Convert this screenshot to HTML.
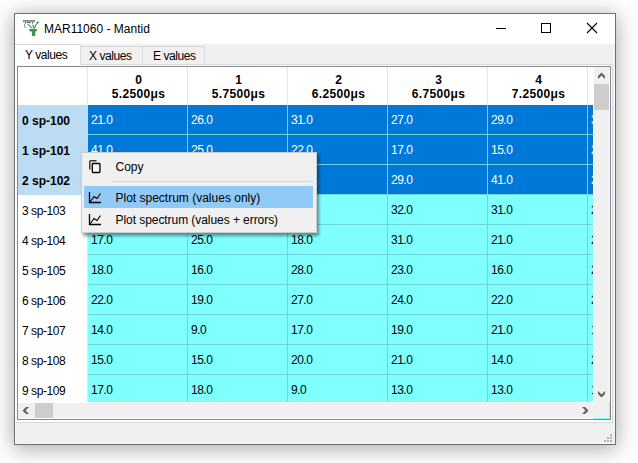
<!DOCTYPE html><html><head><meta charset="utf-8"><style>html,body{margin:0;padding:0;}body{width:638px;height:463px;overflow:hidden;background:#fff;position:relative;font-family:"Liberation Sans",sans-serif;}div{box-sizing:border-box;}</style></head><body>
<div style="position:absolute;left:14px;top:13px;width:602px;height:432px;box-shadow:0 3px 20px 1px rgba(0,0,0,0.34);"></div>
<div style="position:absolute;left:14px;top:13px;width:602px;height:432px;background:#f0f0f0;border:1px solid #6e6e6e;"></div>
<div style="position:absolute;left:15px;top:14px;width:1px;height:430px;background:#f6f6f6;"></div>
<div style="position:absolute;left:614px;top:14px;width:1px;height:430px;background:#f8f8f8;"></div>
<div style="position:absolute;left:15px;top:443px;width:600px;height:1px;background:#f8f8f8;"></div>
<div style="position:absolute;left:15px;top:14px;width:600px;height:30px;background:#fff;"></div>
<div style="position:absolute;left:44px;top:20.84px;line-height:16px;font-size:12px;font-weight:normal;color:#000;white-space:nowrap;">MAR11060 - Mantid</div>
<div style="position:absolute;left:496px;top:28px;width:10px;height:1px;background:#000;"></div>
<div style="position:absolute;left:541px;top:23px;width:10px;height:10px;border:1px solid #000;"></div>
<svg style="position:absolute;left:586px;top:22px" width="12" height="12" viewBox="0 0 12 12"><path d="M1 1L11 11M11 1L1 11" stroke="#000" stroke-width="1.1" fill="none"/></svg>
<svg style="position:absolute;left:22px;top:18px" width="18" height="19" viewBox="22 18 18 19">
<rect x="23.5" y="20.5" width="11" height="1.3" stroke="#8a8a8a" stroke-width="1" fill="#d4d4d4"/>
<path d="M24.5 24 L24.5 27 Q24.6 27.8 26 27.6" stroke="#9a9a9a" stroke-width="1" fill="none"/>
<path d="M25.5 22 L25.5 23.8 M32.5 22 L32.5 23.8" stroke="#707070" stroke-width="1" fill="none"/>
<path d="M27 22.6 L30.6 22.6" stroke="#606060" stroke-width="1.1" fill="none"/>
<path d="M32.6 24 L33 27.5" stroke="#c0c0c0" stroke-width="1" fill="none"/>
<path d="M27.6 24.2 Q30.2 25 31.6 28.2 M38.4 22 Q35.4 24 34.6 28.4 M33.4 25 L33.8 28.5" stroke="#3c9c4c" stroke-width="1.15" fill="none"/>
<ellipse cx="37.8" cy="22.4" rx="1.3" ry="0.8" fill="#3c9c4c"/>
<path d="M29 29.3 Q33 28.4 37.2 29.3 L37 30.6 Q36.2 31.7 35.3 31.8 L35.3 36 L31.9 36 L31.9 31.8 Q29.9 31.7 29.2 30.6 Z" fill="#3a9a4a"/>
</svg>
<div style="position:absolute;left:15px;top:44px;width:600px;height:20px;background:#f0f0f0;"></div>
<div style="position:absolute;left:15px;top:64px;width:598px;height:359px;background:#fff;border:1px solid #d9d9d9;border-left-color:#fff;"></div>
<div style="position:absolute;left:15px;top:44px;width:66px;height:21px;background:#fff;border-top:1px solid #d9d9d9;border-right:1px solid #d9d9d9;"></div>
<div style="position:absolute;left:25px;top:46.84px;line-height:16px;font-size:12px;font-weight:normal;color:#000;white-space:nowrap;letter-spacing:-0.45px;">Y values</div>
<div style="position:absolute;left:81px;top:46px;width:62px;height:18px;background:#f0f0f0;border-top:1px solid #d9d9d9;border-right:1px solid #d9d9d9;"></div>
<div style="position:absolute;left:89px;top:47.84px;line-height:16px;font-size:12px;font-weight:normal;color:#000;white-space:nowrap;letter-spacing:-0.45px;">X values</div>
<div style="position:absolute;left:143px;top:46px;width:62px;height:18px;background:#f0f0f0;border-top:1px solid #d9d9d9;border-right:1px solid #d9d9d9;"></div>
<div style="position:absolute;left:153px;top:47.84px;line-height:16px;font-size:12px;font-weight:normal;color:#000;white-space:nowrap;letter-spacing:-0.45px;">E values</div>
<div style="position:absolute;left:17px;top:66px;width:594px;height:354px;background:#fff;border:1px solid #828790;"></div>
<div style="position:absolute;left:18px;top:67px;width:575px;height:335px;overflow:hidden;">
<div style="position:absolute;left:169px;top:0px;width:1px;height:38px;background:#e5e5e5;"></div>
<div style="position:absolute;left:71px;top:5.599999999999994px;width:99px;text-align:center;font-size:12px;font-weight:bold;line-height:14px;letter-spacing:0.35px;text-indent:0.35px;">0<br>5.2500&#956;s</div>
<div style="position:absolute;left:269px;top:0px;width:1px;height:38px;background:#e5e5e5;"></div>
<div style="position:absolute;left:171px;top:5.599999999999994px;width:99px;text-align:center;font-size:12px;font-weight:bold;line-height:14px;letter-spacing:0.35px;text-indent:0.35px;">1<br>5.7500&#956;s</div>
<div style="position:absolute;left:369px;top:0px;width:1px;height:38px;background:#e5e5e5;"></div>
<div style="position:absolute;left:271px;top:5.599999999999994px;width:99px;text-align:center;font-size:12px;font-weight:bold;line-height:14px;letter-spacing:0.35px;text-indent:0.35px;">2<br>6.2500&#956;s</div>
<div style="position:absolute;left:469px;top:0px;width:1px;height:38px;background:#e5e5e5;"></div>
<div style="position:absolute;left:371px;top:5.599999999999994px;width:99px;text-align:center;font-size:12px;font-weight:bold;line-height:14px;letter-spacing:0.35px;text-indent:0.35px;">3<br>6.7500&#956;s</div>
<div style="position:absolute;left:569px;top:0px;width:1px;height:38px;background:#e5e5e5;"></div>
<div style="position:absolute;left:471px;top:5.599999999999994px;width:99px;text-align:center;font-size:12px;font-weight:bold;line-height:14px;letter-spacing:0.35px;text-indent:0.35px;">4<br>7.2500&#956;s</div>
<div style="position:absolute;left:669px;top:0px;width:1px;height:38px;background:#e5e5e5;"></div>
<div style="position:absolute;left:571px;top:5.599999999999994px;width:99px;text-align:center;font-size:12px;font-weight:bold;line-height:14px;letter-spacing:0.35px;text-indent:0.35px;">5<br>7.7500&#956;s</div>
<div style="position:absolute;left:69px;top:0px;width:1px;height:38px;background:#e5e5e5;"></div>
<div style="position:absolute;left:0px;top:38px;width:69px;height:30px;background:#bcdcf4;"></div>
<div style="position:absolute;left:69px;top:38px;width:1px;height:30px;background:#c2dff5;"></div>
<div style="position:absolute;left:4px;top:45.84px;line-height:16px;font-size:12px;font-weight:bold;color:#000;white-space:nowrap;">0 sp-100</div>
<div style="position:absolute;left:70px;top:38px;width:505px;height:30px;background:#0078d7;"></div>
<div style="position:absolute;left:73px;top:44.84px;line-height:16px;font-size:12px;font-weight:normal;color:#fff;white-space:nowrap;letter-spacing:-0.5px;">21.0</div>
<div style="position:absolute;left:173px;top:44.84px;line-height:16px;font-size:12px;font-weight:normal;color:#fff;white-space:nowrap;letter-spacing:-0.5px;">26.0</div>
<div style="position:absolute;left:273px;top:44.84px;line-height:16px;font-size:12px;font-weight:normal;color:#fff;white-space:nowrap;letter-spacing:-0.5px;">31.0</div>
<div style="position:absolute;left:373px;top:44.84px;line-height:16px;font-size:12px;font-weight:normal;color:#fff;white-space:nowrap;letter-spacing:-0.5px;">27.0</div>
<div style="position:absolute;left:473px;top:44.84px;line-height:16px;font-size:12px;font-weight:normal;color:#fff;white-space:nowrap;letter-spacing:-0.5px;">29.0</div>
<div style="position:absolute;left:573px;top:44.84px;line-height:16px;font-size:12px;font-weight:normal;color:#fff;white-space:nowrap;letter-spacing:-0.5px;">31.0</div>
<div style="position:absolute;left:70px;top:67px;width:505px;height:1px;background:#70d4d8;"></div>
<div style="position:absolute;left:0px;top:68px;width:69px;height:30px;background:#bcdcf4;"></div>
<div style="position:absolute;left:69px;top:68px;width:1px;height:30px;background:#c2dff5;"></div>
<div style="position:absolute;left:4px;top:75.84px;line-height:16px;font-size:12px;font-weight:bold;color:#000;white-space:nowrap;">1 sp-101</div>
<div style="position:absolute;left:70px;top:68px;width:505px;height:30px;background:#0078d7;"></div>
<div style="position:absolute;left:73px;top:74.84px;line-height:16px;font-size:12px;font-weight:normal;color:#fff;white-space:nowrap;letter-spacing:-0.5px;">41.0</div>
<div style="position:absolute;left:173px;top:74.84px;line-height:16px;font-size:12px;font-weight:normal;color:#fff;white-space:nowrap;letter-spacing:-0.5px;">25.0</div>
<div style="position:absolute;left:273px;top:74.84px;line-height:16px;font-size:12px;font-weight:normal;color:#fff;white-space:nowrap;letter-spacing:-0.5px;">22.0</div>
<div style="position:absolute;left:373px;top:74.84px;line-height:16px;font-size:12px;font-weight:normal;color:#fff;white-space:nowrap;letter-spacing:-0.5px;">17.0</div>
<div style="position:absolute;left:473px;top:74.84px;line-height:16px;font-size:12px;font-weight:normal;color:#fff;white-space:nowrap;letter-spacing:-0.5px;">15.0</div>
<div style="position:absolute;left:573px;top:74.84px;line-height:16px;font-size:12px;font-weight:normal;color:#fff;white-space:nowrap;letter-spacing:-0.5px;">21.0</div>
<div style="position:absolute;left:70px;top:97px;width:505px;height:1px;background:#70d4d8;"></div>
<div style="position:absolute;left:0px;top:98px;width:69px;height:30px;background:#bcdcf4;"></div>
<div style="position:absolute;left:69px;top:98px;width:1px;height:30px;background:#c2dff5;"></div>
<div style="position:absolute;left:4px;top:105.84px;line-height:16px;font-size:12px;font-weight:bold;color:#000;white-space:nowrap;">2 sp-102</div>
<div style="position:absolute;left:70px;top:98px;width:505px;height:30px;background:#0078d7;"></div>
<div style="position:absolute;left:73px;top:104.84px;line-height:16px;font-size:12px;font-weight:normal;color:#fff;white-space:nowrap;letter-spacing:-0.5px;">33.0</div>
<div style="position:absolute;left:173px;top:104.84px;line-height:16px;font-size:12px;font-weight:normal;color:#fff;white-space:nowrap;letter-spacing:-0.5px;">20.0</div>
<div style="position:absolute;left:273px;top:104.84px;line-height:16px;font-size:12px;font-weight:normal;color:#fff;white-space:nowrap;letter-spacing:-0.5px;">19.0</div>
<div style="position:absolute;left:373px;top:104.84px;line-height:16px;font-size:12px;font-weight:normal;color:#fff;white-space:nowrap;letter-spacing:-0.5px;">29.0</div>
<div style="position:absolute;left:473px;top:104.84px;line-height:16px;font-size:12px;font-weight:normal;color:#fff;white-space:nowrap;letter-spacing:-0.5px;">41.0</div>
<div style="position:absolute;left:573px;top:104.84px;line-height:16px;font-size:12px;font-weight:normal;color:#fff;white-space:nowrap;letter-spacing:-0.5px;">25.0</div>
<div style="position:absolute;left:70px;top:127px;width:505px;height:1px;background:#70d4d8;"></div>
<div style="position:absolute;left:0px;top:128px;width:69px;height:30px;background:#fff;"></div>
<div style="position:absolute;left:69px;top:128px;width:1px;height:30px;background:#e5e5e5;"></div>
<div style="position:absolute;left:4px;top:135.84px;line-height:16px;font-size:12px;font-weight:normal;color:#000;white-space:nowrap;letter-spacing:-0.45px;">3 sp-103</div>
<div style="position:absolute;left:70px;top:128px;width:505px;height:30px;background:#80ffff;"></div>
<div style="position:absolute;left:73px;top:134.84px;line-height:16px;font-size:12px;font-weight:normal;color:#000;white-space:nowrap;letter-spacing:-0.5px;">23.0</div>
<div style="position:absolute;left:173px;top:134.84px;line-height:16px;font-size:12px;font-weight:normal;color:#000;white-space:nowrap;letter-spacing:-0.5px;">18.0</div>
<div style="position:absolute;left:273px;top:134.84px;line-height:16px;font-size:12px;font-weight:normal;color:#000;white-space:nowrap;letter-spacing:-0.5px;">24.0</div>
<div style="position:absolute;left:373px;top:134.84px;line-height:16px;font-size:12px;font-weight:normal;color:#000;white-space:nowrap;letter-spacing:-0.5px;">32.0</div>
<div style="position:absolute;left:473px;top:134.84px;line-height:16px;font-size:12px;font-weight:normal;color:#000;white-space:nowrap;letter-spacing:-0.5px;">31.0</div>
<div style="position:absolute;left:573px;top:134.84px;line-height:16px;font-size:12px;font-weight:normal;color:#000;white-space:nowrap;letter-spacing:-0.5px;">21.0</div>
<div style="position:absolute;left:70px;top:157px;width:505px;height:1px;background:#70d4d8;"></div>
<div style="position:absolute;left:0px;top:158px;width:69px;height:30px;background:#fff;"></div>
<div style="position:absolute;left:69px;top:158px;width:1px;height:30px;background:#e5e5e5;"></div>
<div style="position:absolute;left:4px;top:165.84px;line-height:16px;font-size:12px;font-weight:normal;color:#000;white-space:nowrap;letter-spacing:-0.45px;">4 sp-104</div>
<div style="position:absolute;left:70px;top:158px;width:505px;height:30px;background:#80ffff;"></div>
<div style="position:absolute;left:73px;top:164.84px;line-height:16px;font-size:12px;font-weight:normal;color:#000;white-space:nowrap;letter-spacing:-0.5px;">17.0</div>
<div style="position:absolute;left:173px;top:164.84px;line-height:16px;font-size:12px;font-weight:normal;color:#000;white-space:nowrap;letter-spacing:-0.5px;">25.0</div>
<div style="position:absolute;left:273px;top:164.84px;line-height:16px;font-size:12px;font-weight:normal;color:#000;white-space:nowrap;letter-spacing:-0.5px;">18.0</div>
<div style="position:absolute;left:373px;top:164.84px;line-height:16px;font-size:12px;font-weight:normal;color:#000;white-space:nowrap;letter-spacing:-0.5px;">31.0</div>
<div style="position:absolute;left:473px;top:164.84px;line-height:16px;font-size:12px;font-weight:normal;color:#000;white-space:nowrap;letter-spacing:-0.5px;">21.0</div>
<div style="position:absolute;left:573px;top:164.84px;line-height:16px;font-size:12px;font-weight:normal;color:#000;white-space:nowrap;letter-spacing:-0.5px;">21.0</div>
<div style="position:absolute;left:70px;top:187px;width:505px;height:1px;background:#70d4d8;"></div>
<div style="position:absolute;left:0px;top:188px;width:69px;height:30px;background:#fff;"></div>
<div style="position:absolute;left:69px;top:188px;width:1px;height:30px;background:#e5e5e5;"></div>
<div style="position:absolute;left:4px;top:195.84px;line-height:16px;font-size:12px;font-weight:normal;color:#000;white-space:nowrap;letter-spacing:-0.45px;">5 sp-105</div>
<div style="position:absolute;left:70px;top:188px;width:505px;height:30px;background:#80ffff;"></div>
<div style="position:absolute;left:73px;top:194.84px;line-height:16px;font-size:12px;font-weight:normal;color:#000;white-space:nowrap;letter-spacing:-0.5px;">18.0</div>
<div style="position:absolute;left:173px;top:194.84px;line-height:16px;font-size:12px;font-weight:normal;color:#000;white-space:nowrap;letter-spacing:-0.5px;">16.0</div>
<div style="position:absolute;left:273px;top:194.84px;line-height:16px;font-size:12px;font-weight:normal;color:#000;white-space:nowrap;letter-spacing:-0.5px;">28.0</div>
<div style="position:absolute;left:373px;top:194.84px;line-height:16px;font-size:12px;font-weight:normal;color:#000;white-space:nowrap;letter-spacing:-0.5px;">23.0</div>
<div style="position:absolute;left:473px;top:194.84px;line-height:16px;font-size:12px;font-weight:normal;color:#000;white-space:nowrap;letter-spacing:-0.5px;">16.0</div>
<div style="position:absolute;left:573px;top:194.84px;line-height:16px;font-size:12px;font-weight:normal;color:#000;white-space:nowrap;letter-spacing:-0.5px;">25.0</div>
<div style="position:absolute;left:70px;top:217px;width:505px;height:1px;background:#70d4d8;"></div>
<div style="position:absolute;left:0px;top:218px;width:69px;height:30px;background:#fff;"></div>
<div style="position:absolute;left:69px;top:218px;width:1px;height:30px;background:#e5e5e5;"></div>
<div style="position:absolute;left:4px;top:225.84px;line-height:16px;font-size:12px;font-weight:normal;color:#000;white-space:nowrap;letter-spacing:-0.45px;">6 sp-106</div>
<div style="position:absolute;left:70px;top:218px;width:505px;height:30px;background:#80ffff;"></div>
<div style="position:absolute;left:73px;top:224.84px;line-height:16px;font-size:12px;font-weight:normal;color:#000;white-space:nowrap;letter-spacing:-0.5px;">22.0</div>
<div style="position:absolute;left:173px;top:224.84px;line-height:16px;font-size:12px;font-weight:normal;color:#000;white-space:nowrap;letter-spacing:-0.5px;">19.0</div>
<div style="position:absolute;left:273px;top:224.84px;line-height:16px;font-size:12px;font-weight:normal;color:#000;white-space:nowrap;letter-spacing:-0.5px;">27.0</div>
<div style="position:absolute;left:373px;top:224.84px;line-height:16px;font-size:12px;font-weight:normal;color:#000;white-space:nowrap;letter-spacing:-0.5px;">24.0</div>
<div style="position:absolute;left:473px;top:224.84px;line-height:16px;font-size:12px;font-weight:normal;color:#000;white-space:nowrap;letter-spacing:-0.5px;">22.0</div>
<div style="position:absolute;left:573px;top:224.84px;line-height:16px;font-size:12px;font-weight:normal;color:#000;white-space:nowrap;letter-spacing:-0.5px;">22.0</div>
<div style="position:absolute;left:70px;top:247px;width:505px;height:1px;background:#70d4d8;"></div>
<div style="position:absolute;left:0px;top:248px;width:69px;height:30px;background:#fff;"></div>
<div style="position:absolute;left:69px;top:248px;width:1px;height:30px;background:#e5e5e5;"></div>
<div style="position:absolute;left:4px;top:255.84px;line-height:16px;font-size:12px;font-weight:normal;color:#000;white-space:nowrap;letter-spacing:-0.45px;">7 sp-107</div>
<div style="position:absolute;left:70px;top:248px;width:505px;height:30px;background:#80ffff;"></div>
<div style="position:absolute;left:73px;top:254.84px;line-height:16px;font-size:12px;font-weight:normal;color:#000;white-space:nowrap;letter-spacing:-0.5px;">14.0</div>
<div style="position:absolute;left:173px;top:254.84px;line-height:16px;font-size:12px;font-weight:normal;color:#000;white-space:nowrap;letter-spacing:-0.5px;">9.0</div>
<div style="position:absolute;left:273px;top:254.84px;line-height:16px;font-size:12px;font-weight:normal;color:#000;white-space:nowrap;letter-spacing:-0.5px;">17.0</div>
<div style="position:absolute;left:373px;top:254.84px;line-height:16px;font-size:12px;font-weight:normal;color:#000;white-space:nowrap;letter-spacing:-0.5px;">19.0</div>
<div style="position:absolute;left:473px;top:254.84px;line-height:16px;font-size:12px;font-weight:normal;color:#000;white-space:nowrap;letter-spacing:-0.5px;">21.0</div>
<div style="position:absolute;left:573px;top:254.84px;line-height:16px;font-size:12px;font-weight:normal;color:#000;white-space:nowrap;letter-spacing:-0.5px;">14.0</div>
<div style="position:absolute;left:70px;top:277px;width:505px;height:1px;background:#70d4d8;"></div>
<div style="position:absolute;left:0px;top:278px;width:69px;height:30px;background:#fff;"></div>
<div style="position:absolute;left:69px;top:278px;width:1px;height:30px;background:#e5e5e5;"></div>
<div style="position:absolute;left:4px;top:285.84px;line-height:16px;font-size:12px;font-weight:normal;color:#000;white-space:nowrap;letter-spacing:-0.45px;">8 sp-108</div>
<div style="position:absolute;left:70px;top:278px;width:505px;height:30px;background:#80ffff;"></div>
<div style="position:absolute;left:73px;top:284.84px;line-height:16px;font-size:12px;font-weight:normal;color:#000;white-space:nowrap;letter-spacing:-0.5px;">15.0</div>
<div style="position:absolute;left:173px;top:284.84px;line-height:16px;font-size:12px;font-weight:normal;color:#000;white-space:nowrap;letter-spacing:-0.5px;">15.0</div>
<div style="position:absolute;left:273px;top:284.84px;line-height:16px;font-size:12px;font-weight:normal;color:#000;white-space:nowrap;letter-spacing:-0.5px;">20.0</div>
<div style="position:absolute;left:373px;top:284.84px;line-height:16px;font-size:12px;font-weight:normal;color:#000;white-space:nowrap;letter-spacing:-0.5px;">21.0</div>
<div style="position:absolute;left:473px;top:284.84px;line-height:16px;font-size:12px;font-weight:normal;color:#000;white-space:nowrap;letter-spacing:-0.5px;">14.0</div>
<div style="position:absolute;left:573px;top:284.84px;line-height:16px;font-size:12px;font-weight:normal;color:#000;white-space:nowrap;letter-spacing:-0.5px;">21.0</div>
<div style="position:absolute;left:70px;top:307px;width:505px;height:1px;background:#70d4d8;"></div>
<div style="position:absolute;left:0px;top:308px;width:69px;height:30px;background:#fff;"></div>
<div style="position:absolute;left:69px;top:308px;width:1px;height:30px;background:#e5e5e5;"></div>
<div style="position:absolute;left:4px;top:315.84px;line-height:16px;font-size:12px;font-weight:normal;color:#000;white-space:nowrap;letter-spacing:-0.45px;">9 sp-109</div>
<div style="position:absolute;left:70px;top:308px;width:505px;height:30px;background:#80ffff;"></div>
<div style="position:absolute;left:73px;top:314.84px;line-height:16px;font-size:12px;font-weight:normal;color:#000;white-space:nowrap;letter-spacing:-0.5px;">17.0</div>
<div style="position:absolute;left:173px;top:314.84px;line-height:16px;font-size:12px;font-weight:normal;color:#000;white-space:nowrap;letter-spacing:-0.5px;">18.0</div>
<div style="position:absolute;left:273px;top:314.84px;line-height:16px;font-size:12px;font-weight:normal;color:#000;white-space:nowrap;letter-spacing:-0.5px;">9.0</div>
<div style="position:absolute;left:373px;top:314.84px;line-height:16px;font-size:12px;font-weight:normal;color:#000;white-space:nowrap;letter-spacing:-0.5px;">13.0</div>
<div style="position:absolute;left:473px;top:314.84px;line-height:16px;font-size:12px;font-weight:normal;color:#000;white-space:nowrap;letter-spacing:-0.5px;">13.0</div>
<div style="position:absolute;left:573px;top:314.84px;line-height:16px;font-size:12px;font-weight:normal;color:#000;white-space:nowrap;letter-spacing:-0.5px;">14.0</div>
<div style="position:absolute;left:70px;top:337px;width:505px;height:1px;background:#70d4d8;"></div>
<div style="position:absolute;left:169px;top:38px;width:1px;height:297px;background:#70d4d8;"></div>
<div style="position:absolute;left:269px;top:38px;width:1px;height:297px;background:#70d4d8;"></div>
<div style="position:absolute;left:369px;top:38px;width:1px;height:297px;background:#70d4d8;"></div>
<div style="position:absolute;left:469px;top:38px;width:1px;height:297px;background:#70d4d8;"></div>
<div style="position:absolute;left:569px;top:38px;width:1px;height:297px;background:#70d4d8;"></div>
<div style="position:absolute;left:669px;top:38px;width:1px;height:297px;background:#70d4d8;"></div>
<div style="position:absolute;left:575px;top:0px;width:1px;height:335px;background:#fff;"></div>
<div style="position:absolute;left:0px;top:335px;width:575px;height:1px;background:#fff;"></div>
</div>
<div style="position:absolute;left:594px;top:67px;width:15px;height:336px;background:#f0f0f0;"></div>
<div style="position:absolute;left:609px;top:67px;width:1px;height:335px;background:#fafafa;"></div>
<div style="position:absolute;left:594px;top:84px;width:15px;height:26px;background:#cdcdcd;"></div>
<div style="position:absolute;left:18px;top:403px;width:591px;height:15px;background:#f0f0f0;"></div>
<div style="position:absolute;left:18px;top:418px;width:575px;height:1px;background:#fff;"></div>
<div style="position:absolute;left:593px;top:418px;width:17px;height:1px;background:#80ffff;"></div>
<div style="position:absolute;left:609px;top:402px;width:1px;height:17px;background:#80ffff;"></div>
<div style="position:absolute;left:35px;top:403px;width:18px;height:15px;background:#cdcdcd;"></div>
<svg style="position:absolute;left:0;top:0" width="638" height="463"><path d="M598 79L598 76L601.5 72.5L605 76L605 79L601.5 75.5Z M598 391L601.5 394.5L605 391L605 394L601.5 397.5L598 394Z M29 407L26 407L22.5 410.5L26 414L29 414L25.5 410.5Z M582 407L585 407L588.5 410.5L585 414L582 414L585.5 410.5Z" fill="#606060"/></svg>
<div style="position:absolute;left:610px;top:434px;width:2px;height:2px;background:#b4b4b4;"></div>
<div style="position:absolute;left:607px;top:437px;width:2px;height:2px;background:#b4b4b4;"></div>
<div style="position:absolute;left:610px;top:437px;width:2px;height:2px;background:#b4b4b4;"></div>
<div style="position:absolute;left:604px;top:440px;width:2px;height:2px;background:#b4b4b4;"></div>
<div style="position:absolute;left:607px;top:440px;width:2px;height:2px;background:#b4b4b4;"></div>
<div style="position:absolute;left:610px;top:440px;width:2px;height:2px;background:#b4b4b4;"></div>
<div style="position:absolute;left:81px;top:152px;width:236px;height:81px;box-shadow:2px 3px 3px rgba(0,0,0,0.42);"></div>
<div style="position:absolute;left:81px;top:152px;width:236px;height:81px;background:#f0f0f0;border:1px solid #cccccc;"></div>
<div style="position:absolute;left:112px;top:181px;width:201px;height:1px;background:#d7d7d7;"></div>
<div style="position:absolute;left:84px;top:186px;width:229px;height:22px;background:#91c9f7;"></div>
<svg style="position:absolute;left:88px;top:159px" width="14" height="15" viewBox="0 0 14 15">
<path d="M1.8 10.5 L1.8 2.8 Q1.8 1.8 2.8 1.8 L8.5 1.8" stroke="#383838" stroke-width="1.5" fill="none"/>
<rect x="4.3" y="4.5" width="7.6" height="9" rx="0.8" ry="0.8" stroke="#000" stroke-width="1.3" fill="#fafafa"/>
</svg>
<svg style="position:absolute;left:88px;top:191px" width="14" height="13" viewBox="0 0 14 13">
<path d="M1.5 1 L1.5 11.5 L13 11.5" stroke="#000" stroke-width="1.3" fill="none"/>
<path d="M2 11 L6 5.5 L9 7.5 L12.5 2.5" stroke="#000" stroke-width="1.2" fill="none"/>
</svg>
<svg style="position:absolute;left:88px;top:213px" width="14" height="13" viewBox="0 0 14 13">
<path d="M1.5 1 L1.5 11.5 L13 11.5" stroke="#000" stroke-width="1.3" fill="none"/>
<path d="M2 11 L6 5.5 L9 7.5 L12.5 2.5" stroke="#000" stroke-width="1.2" fill="none"/>
</svg>
<div style="position:absolute;left:115.5px;top:158.84px;line-height:16px;font-size:12px;font-weight:normal;color:#000;white-space:nowrap;">Copy</div>
<div style="position:absolute;left:115.5px;top:190.34px;line-height:16px;font-size:12px;font-weight:normal;color:#000;white-space:nowrap;">Plot spectrum (values only)</div>
<div style="position:absolute;left:115.5px;top:212.34px;line-height:16px;font-size:12px;font-weight:normal;color:#000;white-space:nowrap;letter-spacing:-0.06px;">Plot spectrum (values + errors)</div>
</body></html>
